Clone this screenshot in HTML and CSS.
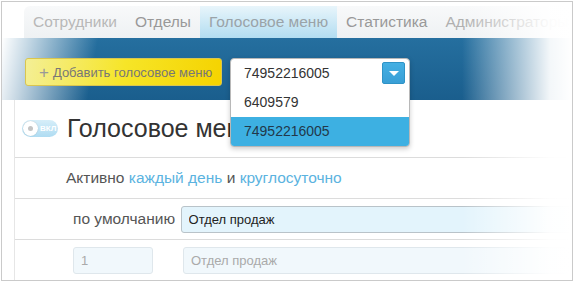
FILE: index.html
```html
<!DOCTYPE html>
<html lang="ru">
<head>
  <meta charset="UTF-8">
  <title>Голосовое меню</title>
  <link rel="stylesheet" href="styles.css">
</head>
<body>
  <div class="frame">
    <!-- Top navigation -->
    <nav class="tabs">
      <a class="tab first">Сотрудники</a>
      <a class="tab">Отделы</a>
      <a class="tab active">Голосовое меню</a>
      <a class="tab">Статистика</a>
      <a class="tab last">Администраторы</a>
    </nav>

    <!-- Toolbar band -->
    <div class="band">
      <button class="add-btn"><span class="plus">+</span> Добавить голосовое меню</button>
      <div class="select">
        <div class="option current">74952216005<span class="arrow"></span></div>
        <div class="option">6409579</div>
        <div class="option selected">74952216005</div>
      </div>
    </div>

    <!-- Voice menu panel -->
    <section class="panel">
      <div class="title-row">
        <span class="toggle"><span class="knob"></span>ВКЛ</span>
        <h1>Голосовое меню</h1>
      </div>
      <div class="row schedule">
        <span>Активно <a href="#">каждый день</a> и <a href="#">круглосуточно</a></span>
      </div>
      <div class="row field-row">
        <label class="field-label">по умолчанию</label>
        <input class="dept" type="text" value="Отдел продаж">
      </div>
      <div class="row field-row">
        <input class="num" type="text" placeholder="1">
        <input class="dept empty" type="text" placeholder="Отдел продаж">
      </div>
    </section>

    <div class="fade-right"></div>
  </div>
</body>
</html>
```

FILE: styles.css
```css
/* General styles */
body {
  margin: 0;
  padding: 1px 0 0 1px;
  font-family: "Liberation Sans", Arial, sans-serif;
  background-color: #fff;
  color: #333;
}

.frame {
  position: relative;
  width: 572px;
  height: 280px;
  box-sizing: border-box;
  border: 1px solid #cacaca;
  background-color: #fff;
  overflow: hidden;
}

/* Navigation */
.tabs {
  display: flex;
  height: 32px;
  margin: 4px 0 0 22px;
  border-radius: 6px 0 0 0;
  background: linear-gradient(#f8f9fa, #eef1f3);
}

.tab {
  display: flex;
  align-items: center;
  padding: 0 9px;
  font-size: 15.5px;
  color: #999;
  white-space: nowrap;
}

.tab.first {
  color: #b8b8b8;
}

.tab.active {
  color: #9aa3a8;
  background: linear-gradient(#e8f5fb, #b2ddf1);
}

.tab.last {
  color: #b0b0b0;
}

/* Toolbar band */
.band {
  position: relative;
  height: 62px;
  box-sizing: border-box;
  padding: 20px 0 0 23px;
  background:
    linear-gradient(100deg, #fff 0, rgba(255, 255, 255, 0.75) 25px, rgba(255, 255, 255, 0) 95px),
    linear-gradient(#256f9f, #1a5e8d);
}

.add-btn {
  display: flex;
  align-items: center;
  gap: 4px;
  width: 197px;
  height: 28px;
  padding: 0 0 0 13px;
  border: 1px solid #d9c550;
  border-radius: 3px;
  background: linear-gradient(100deg, #f4ef96, #f6e528 50%, #f5d300);
  font-family: inherit;
  font-size: 13px;
  color: #777;
}

.add-btn .plus {
  font-size: 17px;
  color: #999;
  line-height: 1;
}

.select {
  position: absolute;
  left: 228px;
  top: 20px;
  width: 178px;
  border: 1px solid #b8b8b8;
  border-radius: 4px;
  background-color: #fff;
  box-shadow: 0 2px 5px rgba(0, 0, 0, 0.2);
  overflow: hidden;
  z-index: 2;
}

.option {
  position: relative;
  height: 29px;
  padding-left: 13px;
  line-height: 29px;
  font-size: 14px;
  color: #333;
}

.option.selected {
  background-color: #3db0e2;
  color: #22384a;
}

.arrow {
  position: absolute;
  right: 4px;
  top: 3px;
  width: 21px;
  height: 20px;
  border: 1px solid #2f93c6;
  border-radius: 2px;
  background: linear-gradient(#45b0e3, #399fd6);
}

.arrow::after {
  content: "";
  position: absolute;
  left: 6px;
  top: 8px;
  border-left: 5px solid transparent;
  border-right: 5px solid transparent;
  border-top: 5px solid #fff;
}

/* Panel */
.panel {
  margin-left: 12px;
  border-left: 1px solid #e6e6e6;
}

.title-row {
  display: flex;
  align-items: center;
  height: 57px;
  border-bottom: 1px solid #dcdcdc;
}

.toggle {
  display: flex;
  align-items: center;
  gap: 2px;
  width: 36px;
  height: 17px;
  margin: 0 9px 0 7px;
  box-sizing: border-box;
  padding-left: 1px;
  border-radius: 9px;
  background: linear-gradient(#d6eef9, #afdcf2);
  font-size: 8px;
  font-weight: bold;
  color: #fff;
  overflow: hidden;
}

.knob {
  position: relative;
  flex: none;
  width: 15px;
  height: 15px;
  border-radius: 50%;
  background-color: #fff;
  box-shadow: 0 0 1px rgba(0, 0, 0, 0.25);
}

.knob::after {
  content: "";
  position: absolute;
  left: 5px;
  top: 5px;
  width: 5px;
  height: 5px;
  border-radius: 50%;
  background-color: #c4c4c4;
}

h1 {
  margin: 0;
  font-size: 25px;
  font-weight: normal;
  color: #333;
  white-space: nowrap;
}

.row {
  display: flex;
  align-items: center;
  height: 40px;
  border-bottom: 1px solid #dcdcdc;
}

.schedule {
  padding-left: 51px;
  font-size: 15.5px;
  color: #555;
}

.schedule a {
  color: #5bb3e0;
  text-decoration: none;
}

.field-row {
  padding-left: 58px;
}

.field-label {
  width: 110px;
  font-size: 15.5px;
  color: #555;
}

.field-row input {
  height: 27px;
  box-sizing: border-box;
  padding: 0 7px;
  border: 1px solid #b9c3c9;
  border-radius: 3px;
  background-color: #e3f4fc;
  font-family: inherit;
  font-size: 13px;
  color: #222;
}

.field-row .dept {
  width: 400px;
}

.field-row .num {
  width: 80px;
  margin-right: 30px;
  border-color: #dfe7ec;
  background-color: #f1f8fc;
}

.field-row .empty {
  border-color: #dfe7ec;
  background-color: #f1f8fc;
}

.field-row input::placeholder {
  color: #aaa;
}

/* Right edge fade */
.fade-right {
  position: absolute;
  top: 0;
  right: 0;
  bottom: 0;
  width: 110px;
  background: linear-gradient(to right, rgba(255, 255, 255, 0), rgba(255, 255, 255, 0.95) 80%, #fff);
  pointer-events: none;
}
```
